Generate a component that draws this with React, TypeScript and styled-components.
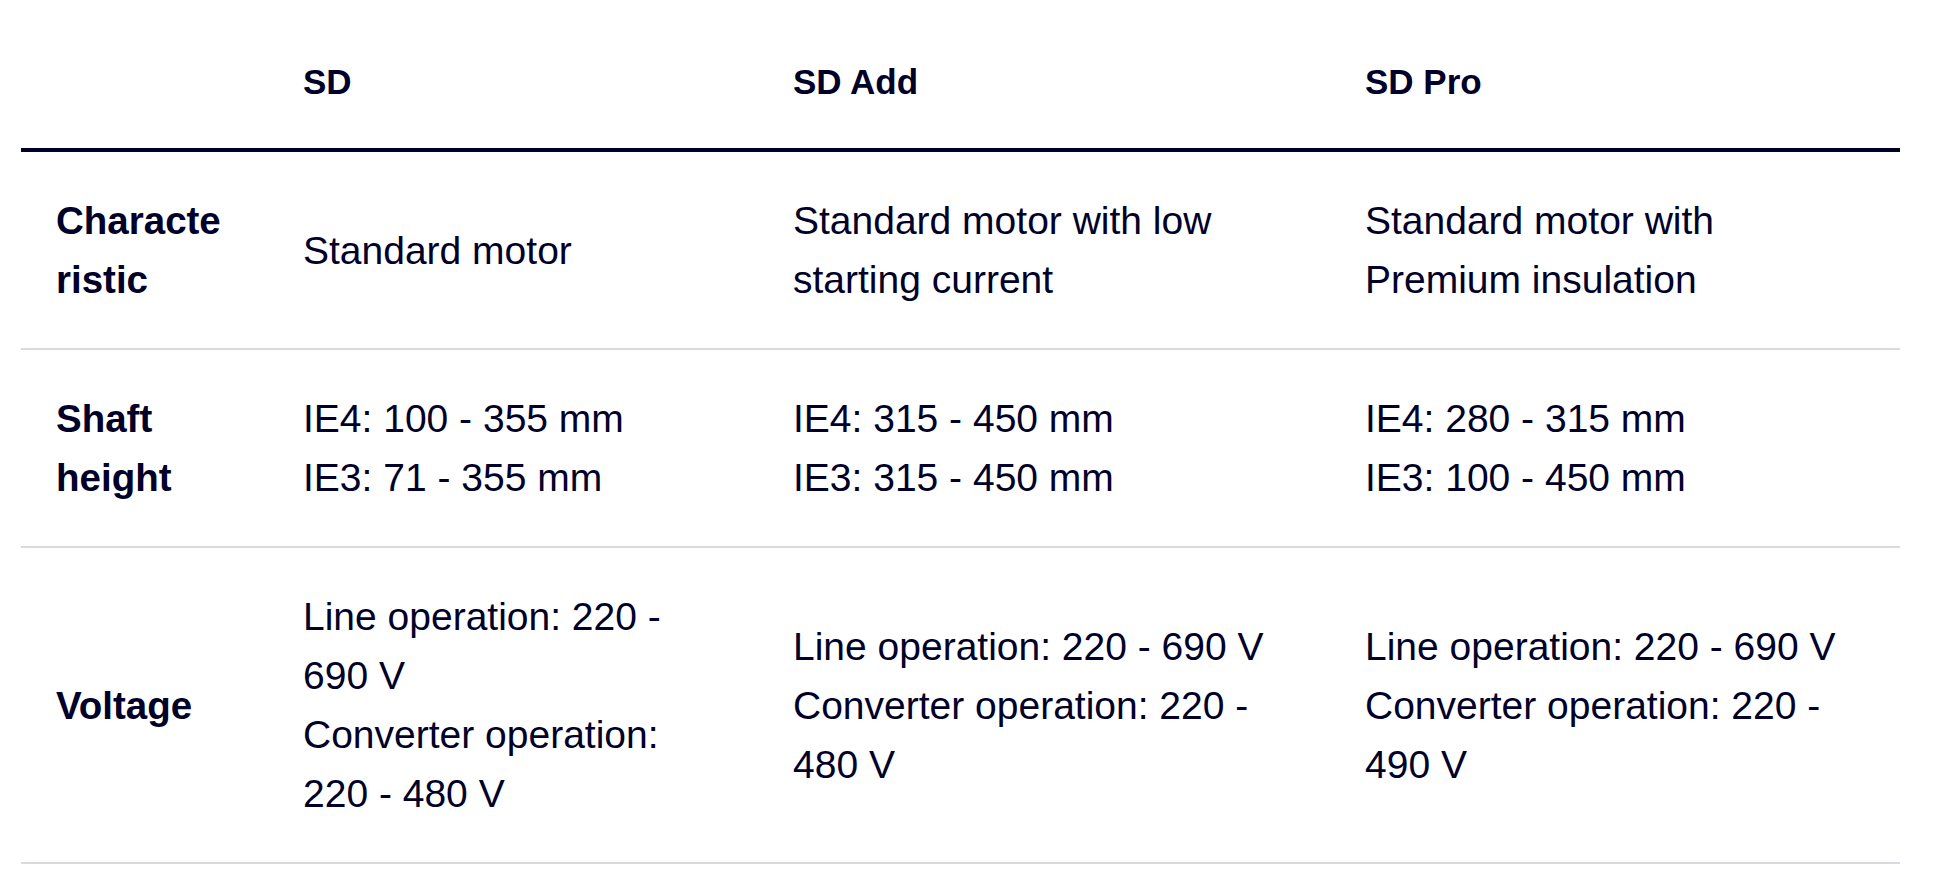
import styled, { createGlobalStyle } from "styled-components";

const GlobalStyle = createGlobalStyle`
  body {
    margin: 0;
    background: #ffffff;
    font-family: "Liberation Sans", Arial, sans-serif;
    color: #000028;
  }
`;

const Page = styled.div`
  padding-left: 21px;
`;

const Table = styled.div`
  display: grid;
  grid-template-columns: 250px 490px 572px 567px;
  width: 1879px;
`;

const HeadCell = styled.div`
  padding: 52px 48px 37px 32px;
  line-height: 59px;
  font-size: 35px;
  font-weight: 700;
  border-bottom: 4px solid #000028;
  white-space: nowrap;
`;

const Cell = styled.div`
  display: flex;
  flex-direction: column;
  justify-content: center;
  padding: 39px 48px 39px 32px;
  line-height: 59px;
  font-size: 39px;
  border-bottom: 2px solid #d9d9df;
`;

const LabelCell = styled(Cell)`
  padding-left: 35px;
  padding-right: 43px;
  font-size: 38.5px;
  font-weight: 700;
  overflow-wrap: anywhere;
`;

const Line = styled.div``;

function App() {
  const models = ["SD", "SD Add", "SD Pro"];

  const rows = [
    {
      label: "Characteristic",
      values: [
        ["Standard motor"],
        ["Standard motor with low starting current"],
        ["Standard motor with Premium insulation"],
      ],
    },
    {
      label: "Shaft height",
      values: [
        ["IE4: 100 - 355 mm", "IE3: 71 - 355 mm"],
        ["IE4: 315 - 450 mm", "IE3: 315 - 450 mm"],
        ["IE4: 280 - 315 mm", "IE3: 100 - 450 mm"],
      ],
    },
    {
      label: "Voltage",
      values: [
        ["Line operation: 220 - 690 V", "Converter operation: 220 - 480 V"],
        ["Line operation: 220 - 690 V", "Converter operation: 220 - 480 V"],
        ["Line operation: 220 - 690 V", "Converter operation: 220 - 490 V"],
      ],
    },
  ];

  return (
    <Page>
      <GlobalStyle />
      <Table>
        <HeadCell />
        {models.map((m) => (
          <HeadCell key={m}>{m}</HeadCell>
        ))}
        {rows.map((row) => [
          <LabelCell key={row.label}>{row.label}</LabelCell>,
          ...row.values.map((lines, i) => (
            <Cell key={row.label + i}>
              {lines.map((l) => (
                <Line key={l}>{l}</Line>
              ))}
            </Cell>
          )),
        ])}
      </Table>
    </Page>
  );
}

export default App;
